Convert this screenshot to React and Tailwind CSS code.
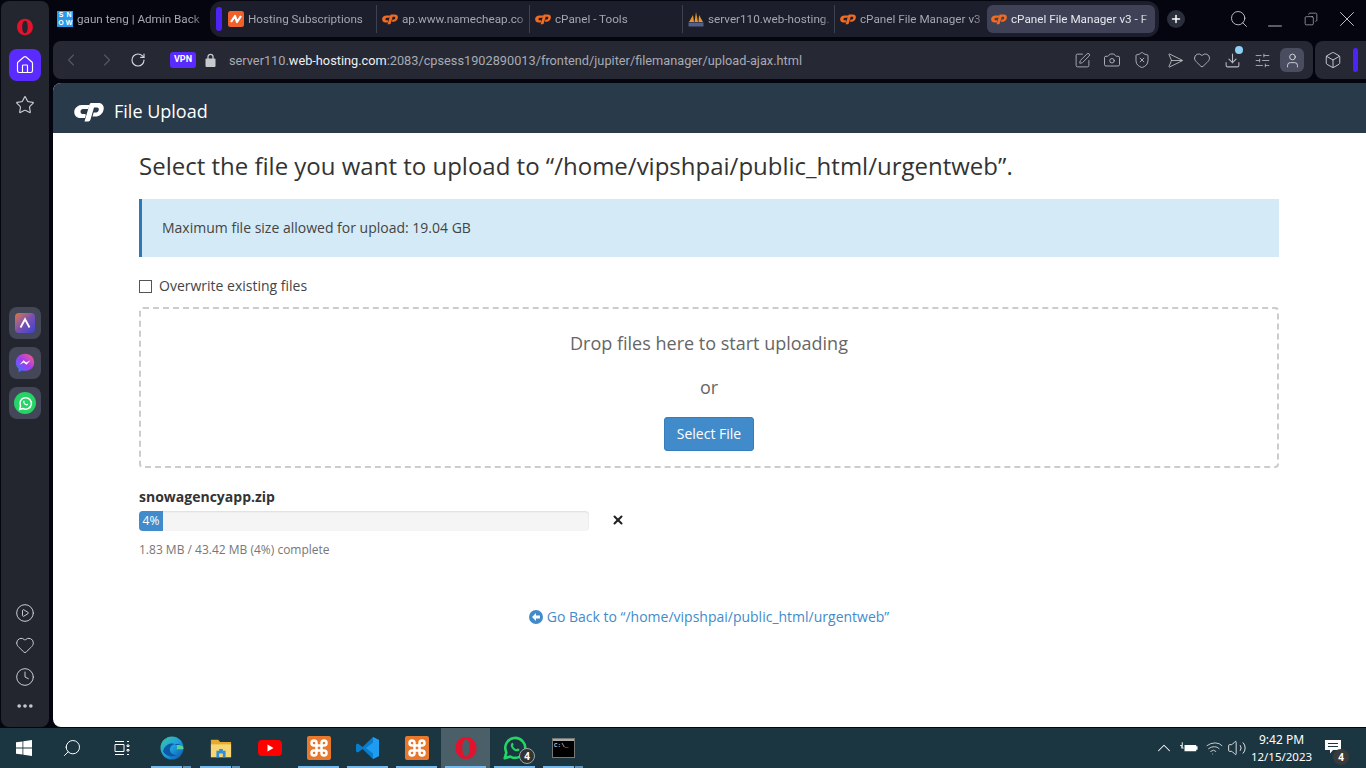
import {
  Box, Camera, ChevronLeft, ChevronRight, ChevronUp, Clock, Copy, Download, Heart, Home,
  MoreHorizontal, Plus, RotateCw, Search, Send, ShieldX, SlidersHorizontal, SquarePen,
  Star, User, Volume2, Wifi, X, Minus, CirclePlay,
} from 'lucide-react';

// logo cPanel (c + P inclinados)
function CpLogo({ className, color = '#f26b21' }) {
  return (
    <svg viewBox="0 0 30 20" className={className} fill={color}>
      <path d="M8 3.500h7.500l-1.200 4H9c-3 0-3.500 5-.5 5h2c1 0 1.500.5 1.200 1.500l-.7 2.500H6.500c-5 0-7-4-6-8 1-3 4-5 7.500-5z" />
      <path d="M10.500 20 15.500 3c.3-1 1-1.500 2-1.500H24c4.500 0 6.500 3 5.500 7-1 4-4 6.500-8 6.500h-3l1.200-4H22c3 0 4-5 1-5h-3l-3.500 12c-.5 1.500-1.500 2-3 2z" />
    </svg>
  );
}

function NamecheapIcon() {
  return (
    <svg viewBox="0 0 16 16" className="h-4 w-4 shrink-0">
      <rect width="16" height="16" rx="2.500" fill="#f0622a" />
      <path d="M3 11 7 5l2 6 4-6" fill="none" stroke="#fff" strokeWidth="2.200" strokeLinejoin="round" />
    </svg>
  );
}

function SnowIcon() {
  return (
    <div className="grid h-4 w-4 shrink-0 grid-cols-2 bg-[#2a9bea] font-['Liberation_Sans',sans-serif] text-[7px] font-bold leading-[8px] text-white">
      <span className="text-center">S</span>
      <span className="text-center">N</span>
      <span className="text-center">O</span>
      <span className="text-center">W</span>
    </div>
  );
}

function SailIcon() {
  return (
    <svg viewBox="0 0 16 16" className="h-4 w-4 shrink-0">
      <path d="M1 11 5 4l1 7zM6.500 11 8 1l2 10zM10.500 11 11 4l4 7z" fill="#e8942a" />
      <rect x="0.500" y="11.500" width="15" height="4" fill="#54608a" />
    </svg>
  );
}

function Tab({ icon, title, w, divider = true }) {
  return (
    <div className={`flex h-7 shrink-0 items-center gap-1 pl-[5px] ${w} ${divider ? 'border-r border-[#3d4150]' : ''}`}>
      {icon}
      <span className="min-w-0 flex-1 overflow-hidden whitespace-nowrap pr-1 pt-[2px] text-[11.700px] text-[#a4a7b0] [mask-image:linear-gradient(to_right,black_90%,transparent)]">
        {title}
      </span>
    </div>
  );
}

function SideApp({ children }) {
  return <div className="flex h-8 w-8 items-center justify-center rounded-lg bg-[#444757]">{children}</div>;
}

function ToolIcon({ children }) {
  return <div className="relative flex w-[30px] shrink-0 justify-center">{children}</div>;
}

function TaskItem({ children, active, open, more }) {
  return (
    <div className={`relative flex h-10 w-[49px] items-center justify-center ${active ? 'bg-[#4b5f69]' : ''}`}>
      {children}
      {open && (
        <div className={`absolute bottom-0 left-1 h-[2px] bg-[#76b9ed] ${more ? 'w-[31px]' : 'w-[41px]'}`} />
      )}
      {more && <div className="absolute bottom-0 left-[36px] h-[2px] w-[8px] bg-[#5f93b8]" />}
    </div>
  );
}

function OperaO({ className }) {
  return (
    <svg viewBox="0 0 24 24" className={className}>
      <path fillRule="evenodd" fill="#e3132d" d="M12 1C5.500 1 1.500 6 1.500 12S5.500 23 12 23s10.500-5 10.500-11S18.500 1 12 1zm0 2.600c2.500 0 3.700 4 3.700 8.400s-1.200 8.400-3.700 8.400S8.300 16.400 8.300 12 9.500 3.600 12 3.600z" />
    </svg>
  );
}

function XamppIcon() {
  return (
    <div className="flex h-6 w-6 items-center justify-center rounded-[2px] bg-[#e8782e]">
      <svg viewBox="0 0 24 24" className="h-5 w-5" fill="none" stroke="#fff" strokeWidth="3">
        <path d="M15 6v12a3 3 0 1 0 3-3H6a3 3 0 1 0 3 3V6a3 3 0 1 0-3 3h12a3 3 0 1 0-3-3" />
      </svg>
    </div>
  );
}

function WhatsGlyph({ className, color = '#25d366' }) {
  return (
    <svg viewBox="0 0 24 24" className={className} fill="none">
      <path d="M2.500 21.500 4 16a9.200 9.200 0 1 1 3.700 3.900z" stroke={color} strokeWidth="2.400" strokeLinejoin="round" />
      <path d="M8.500 8c.8-1.500 1.700-1 2.200.5.200.7-.7 1-.6 1.600.4 1.200 1.800 2.600 3.200 3 .6.100.9-.8 1.500-.6 1.600.5 2 1.400.5 2.300-3.300 1.600-8.600-3.800-6.800-6.800z" fill={color} />
    </svg>
  );
}

export default function App() {
  return (
    <div className="flex h-[768px] w-[1366px] flex-col overflow-hidden bg-[#05050f] font-['Roboto',sans-serif]">
      <div className="flex h-[727px] shrink-0">
        {/* barra lateral do Opera */}
        <aside className="mt-px ml-px flex h-[726px] w-[48px] shrink-0 flex-col items-center rounded-lg bg-[#23262f] pb-[11px]">
          <OperaO className="mt-[17px] h-[18px] w-[18px]" />
          <div className="mt-[13px] flex h-8 w-8 items-center justify-center rounded-lg bg-[#5a2bff]">
            <Home size={20} strokeWidth={1.400} className="text-white" />
          </div>
          <Star size={20} strokeWidth={1.400} className="mt-[14px] text-[#c9cbd2]" />
          <div className="mt-[192px] flex flex-col gap-2">
            <SideApp>
              <div className="flex h-5 w-5 items-center justify-center rounded bg-gradient-to-br from-[#e0702a] via-[#7a4fb0] to-[#3a3fd0]">
                <svg viewBox="0 0 16 16" className="h-3 w-3" fill="none" stroke="#fff" strokeWidth="2.400">
                  <path d="M2 14 8 3l6 11" />
                </svg>
              </div>
            </SideApp>
            <SideApp>
              <svg viewBox="0 0 24 24" className="h-[22px] w-[22px]">
                <defs>
                  <linearGradient id="msg" x1="0" y1="1" x2="1" y2="0">
                    <stop offset="0" stopColor="#2f7bff" />
                    <stop offset="0.500" stopColor="#a03cf0" />
                    <stop offset="1" stopColor="#ff5f78" />
                  </linearGradient>
                </defs>
                <path d="M12 2C6 2 2 6.200 2 11.500c0 2.800 1.100 5.200 3 6.900V22l3.300-1.800c1.200.3 2.400.5 3.700.5 6 0 10-4 10-9.200S18 2 12 2z" fill="url(#msg)" />
                <path d="m6 14 4.500-5 2.800 2.500L18 9l-4.500 5-2.800-2.500z" fill="#fff" />
              </svg>
            </SideApp>
            <SideApp>
              <div className="flex h-[22px] w-[22px] items-center justify-center rounded-full bg-[#25d366]">
                <WhatsGlyph className="h-[15px] w-[15px]" color="#fff" />
              </div>
            </SideApp>
          </div>
          <div className="mt-auto flex flex-col items-center gap-3">
            <CirclePlay size={20} strokeWidth={1.200} className="text-[#c9cbd2]" />
            <Heart size={20} strokeWidth={1.200} className="text-[#c9cbd2]" />
            <Clock size={20} strokeWidth={1.200} className="text-[#c9cbd2]" />
          </div>
          <MoreHorizontal size={20} strokeWidth={2.400} className="mt-[9px] text-[#c9cbd2]" />
        </aside>

        <div className="flex min-w-0 flex-1 flex-col pl-1">
          {/* abas */}
          <div className="flex h-[41px] shrink-0 pt-px">
            <div className="flex h-9 w-[157px] shrink-0 items-center gap-1 pl-1">
              <SnowIcon />
              <span className="min-w-0 flex-1 overflow-hidden whitespace-nowrap pr-1 pt-[2px] text-[11.700px] text-[#a4a7b0] [mask-image:linear-gradient(to_right,black_85%,transparent)]">
                gaun teng | Admin Back
              </span>
            </div>
            <div className="flex h-9 w-[949px] shrink-0 items-center rounded-xl bg-[#1c1e2b] pl-[6px]">
              <div className="mr-[1px] h-6 w-[6px] shrink-0 rounded-full bg-[#4d24f5]" />
              <Tab icon={<NamecheapIcon />} title="Hosting Subscriptions" w="w-[154px]" />
              <Tab icon={<CpLogo className="h-[12px] w-4 shrink-0" />} title="ap.www.namecheap.co" w="w-[153px]" />
              <Tab icon={<CpLogo className="h-[12px] w-4 shrink-0" />} title="cPanel - Tools" w="w-[153px]" />
              <Tab icon={<SailIcon />} title="server110.web-hosting." w="w-[152px]" />
              <Tab icon={<CpLogo className="h-[12px] w-4 shrink-0" />} title="cPanel File Manager v3" w="w-[152px]" divider={false} />
              <div className="flex h-7 w-[168px] shrink-0 items-center gap-1 rounded-md bg-[#3f4257] pl-1">
                <CpLogo className="h-[12px] w-4 shrink-0" />
                <span className="min-w-0 flex-1 overflow-hidden whitespace-nowrap pr-1 pt-[2px] text-[11.700px] text-[#e6e7ec] [mask-image:linear-gradient(to_right,black_90%,transparent)]">
                  cPanel File Manager v3 - F
                </span>
              </div>
            </div>
            <div className="ml-2 mt-[9px] flex h-[18px] w-[18px] items-center justify-center rounded-full bg-[#2a2d3a]">
              <Plus size={12} strokeWidth={3} className="text-white" />
            </div>
            <div className="ml-[36px] flex h-9 flex-1 items-center text-[#d9dade]">
              <div className="flex w-9 justify-center"><Search size={20} strokeWidth={1} /></div>
              <div className="flex w-9 justify-center pt-[14px]"><Minus size={22} strokeWidth={0.900} /></div>
              <div className="flex w-9 justify-center"><Copy size={14} strokeWidth={1} className="-scale-x-100" /></div>
              <div className="flex w-9 justify-center"><X size={26} strokeWidth={0.800} /></div>
            </div>
          </div>

          {/* barra de endereco */}
          <div className="flex h-[38px] shrink-0 gap-[2px]">
            <div className="flex min-w-0 flex-1 items-center rounded-lg bg-[#262934] pl-2">
              <ChevronLeft size={20} strokeWidth={1.300} className="text-[#555863]" />
              <ChevronRight size={20} strokeWidth={1.300} className="ml-4 text-[#555863]" />
              <RotateCw size={16} strokeWidth={1.700} className="ml-[13px] text-[#d5d6da]" />
              <span className="ml-[24px] flex h-[16px] w-[26px] items-center justify-center rounded-[3px] bg-[#5a2bff] text-[9px] font-bold text-white">VPN</span>
              <svg viewBox="0 0 11 14" className="ml-[9px] h-[14px] w-[11px]">
                <path d="M3 6V3.800a2.500 2.500 0 0 1 5 0V6" fill="none" stroke="#c8c9ce" strokeWidth="1.300" />
                <rect x="0.500" y="5.500" width="10" height="8.500" rx="1" fill="#c8c9ce" />
              </svg>
              <div className="ml-[13px] whitespace-nowrap pt-[2px] text-[12.750px] text-[#a9abb3]">
                server110.<span className="text-[#f0f0f2]">web-hosting.com</span>:2083/cpsess1902890013/frontend/jupiter/filemanager/upload-ajax.html
              </div>
              <div className="ml-auto flex items-center pr-[6px] text-[#b9bbc2]">
                <ToolIcon><SquarePen size={17} strokeWidth={1.200} /></ToolIcon>
                <ToolIcon><Camera size={18} strokeWidth={1.200} /></ToolIcon>
                <ToolIcon><ShieldX size={18} strokeWidth={1.200} /></ToolIcon>
                <ToolIcon><Send size={17} strokeWidth={1.200} className="rotate-45" /></ToolIcon>
                <ToolIcon><Heart size={18} strokeWidth={1.200} /></ToolIcon>
                <ToolIcon>
                  <Download size={17} strokeWidth={1.500} />
                  <div className="absolute left-[18px] -top-[6px] h-2 w-2 rounded-full bg-[#8fd0f5]" />
                </ToolIcon>
                <ToolIcon><SlidersHorizontal size={17} strokeWidth={1.200} /></ToolIcon>
                <ToolIcon>
                  <div className="flex h-6 w-6 items-center justify-center rounded-md bg-[#4a4d60]">
                    <User size={17} strokeWidth={1.200} className="text-[#e4e5e9]" />
                  </div>
                </ToolIcon>
              </div>
            </div>
            <div className="flex w-[51px] shrink-0 items-center rounded-l-lg bg-[#262934] pl-[9px]">
              <Box size={18} strokeWidth={1.200} className="text-[#d5d6da]" />
              <div className="ml-[11px] h-6 w-[5px] rounded-full bg-[#4d24f5]" />
            </div>
          </div>

          {/* pagina */}
          <div className="mt-1 flex min-h-0 flex-1 flex-col overflow-hidden rounded-bl-lg rounded-tl-lg bg-white font-['Open_Sans',sans-serif]">
            <header className="flex h-[50px] shrink-0 items-center bg-[#293a4a] pl-[21px] pt-[6px]">
              <CpLogo className="h-[21px] w-[30px]" color="#ffffff" />
              <h1 className="ml-[10px] text-[18px] text-white">File Upload</h1>
            </header>
            <main className="flex-1 pl-[86px] pr-[87px] text-[#333]">
              <h2 className="mt-[15px] text-[24px] leading-9">
                Select the file you want to upload to “/home/vipshpai/public_html/urgentweb”.
              </h2>
              <div className="mt-[15px] flex h-[58px] items-center border-l-[3px] border-[#2e79b5] bg-[#d4ebf7] pb-[2px] pl-5 text-[14px] text-[#444]">
                Maximum file size allowed for upload: 19.04 GB
              </div>
              <label className="mt-[19px] flex h-5 items-center text-[14px] text-[#444]">
                <span className="h-[13px] w-[13px] border border-[#555] bg-white" />
                <span className="ml-[7px] pb-[2px]">Overwrite existing files</span>
              </label>
              <div className="mt-[11px] flex h-[161px] flex-col items-center rounded-[4px] border-2 border-dashed border-[#ccc] text-[18px] text-[#666]">
                <div className="mt-[21px] leading-[26px]">Drop files here to start uploading</div>
                <div className="mt-[18px] leading-[26px]">or</div>
                <button className="mt-[17px] h-[34px] w-[90px] rounded-[3px] border border-[#357ebd] bg-[#428bca] pb-[2px] text-[14px] text-white">
                  Select File
                </button>
              </div>
              <div className="mt-[19px] text-[14px] font-bold leading-[19px] text-[#333]">snowagencyapp.zip</div>
              <div className="mt-[5px] flex items-center">
                <div className="h-5 w-[450px] overflow-hidden rounded bg-[#f5f5f5] shadow-[inset_0_1px_2px_rgba(0,0,0,0.1)]">
                  <div className="flex h-5 w-6 items-center justify-center bg-[#428bca] text-[12px] text-white">4%</div>
                </div>
                <X size={14} strokeWidth={3.500} className="ml-[22px] -mt-[2px] text-[#222]" />
              </div>
              <div className="mt-[10px] text-[12px] leading-[18px] text-[#777]">1.83 MB / 43.42 MB (4%) complete</div>
              <div className="mt-[48px] flex items-center justify-center text-[14px] leading-5 text-[#428bca]">
                <svg viewBox="0 0 16 16" className="mr-[4px] h-[14px] w-[14px]">
                  <circle cx="8" cy="8" r="8" fill="#428bca" />
                  <path d="M8 3.500 3.500 8 8 12.500V9.700h4.500V6.300H8z" fill="#fff" />
                </svg>
                Go Back to “/home/vipshpai/public_html/urgentweb”
              </div>
            </main>
          </div>
        </div>
      </div>

      {/* barra de tarefas do Windows */}
      <footer className="mt-px flex h-10 shrink-0 items-center bg-[#1b3541] font-['Noto_Sans',sans-serif] text-white">
        <div className="flex w-12 justify-center">
          <svg viewBox="0 0 16 16" className="h-4 w-4" fill="#fff">
            <path d="M0 2.300 6.500 1.400v6.200H0zM7.300 1.300 16 0v7.600H7.300zM0 8.400h6.500v6.200L0 13.700zM7.300 8.400H16V16l-8.700-1.300z" />
          </svg>
        </div>
        <div className="flex w-12 justify-center">
          <Search size={20} strokeWidth={1.200} className="-scale-x-100" />
        </div>
        <div className="flex w-[51px] justify-center">
          <svg viewBox="0 0 16 16" className="h-4 w-4" fill="none" stroke="#fff" strokeWidth="1">
            <path d="M1 1.500h9M1 14.500h9M1 4.500h9v7H1zM13 1.500h2M13 5h2v1.500h-2zM13 9.500h2V11h-2zM13 14.500h2" />
          </svg>
        </div>
        <TaskItem open more>
          <svg viewBox="0 0 24 24" className="h-6 w-6">
            <defs>
              <linearGradient id="edge" x1="0" y1="0" x2="1" y2="1">
                <stop offset="0" stopColor="#3cc9a0" />
                <stop offset="0.500" stopColor="#1f9fe0" />
                <stop offset="1" stopColor="#0b4fa8" />
              </linearGradient>
            </defs>
            <circle cx="12" cy="12" r="11.500" fill="url(#edge)" />
            <path d="M23.500 13c-1-4-5-5.500-8-5-3.500.5-6 3-5.500 6.500.4 3 3.500 4.500 6.500 4.500-5 3-11 1-13.500-3.500C5 7 13 6 16 9c2 2 1 4.500-1 5h7z" fill="#0c59a6" />
            <path d="M16 9c2 2 1 4-1 4.500H22c1.500-.2 1.600-1 1.500-1.500-.5-2.500-2.500-3.500-7.500-3z" fill="#54d48e" />
          </svg>
        </TaskItem>
        <TaskItem open more>
          <svg viewBox="0 0 24 24" className="h-[22px] w-[22px]">
            <path d="M1 3h8l2 2.500h12V22H1z" fill="#e8a92e" />
            <path d="M1 8h22v14H1z" fill="#f7d774" />
            <path d="M7 22v-7h3v-2h4v2h3v7h-3v-4h-4v4z" fill="#2f8fd8" />
          </svg>
        </TaskItem>
        <TaskItem>
          <svg viewBox="0 0 24 16" className="h-4 w-6">
            <rect width="24" height="16" rx="4" fill="#f00" />
            <path d="m9.500 4.500 6 3.500-6 3.500z" fill="#fff" />
          </svg>
        </TaskItem>
        <TaskItem open><XamppIcon /></TaskItem>
        <TaskItem open>
          <svg viewBox="0 0 24 24" className="h-6 w-6">
            <path d="M17 1 23 4v16l-6 3L6.500 13 2 16.500 0 15.500v-7L2 7.500 6.500 11z" fill="#0a7ccc" />
            <path d="M17 1 23 4v16l-6 3V6.500L10 12l7 5.500z" fill="#1f9cf0" />
          </svg>
        </TaskItem>
        <TaskItem open><XamppIcon /></TaskItem>
        <TaskItem active open>
          <OperaO className="h-6 w-6" />
        </TaskItem>
        <TaskItem open>
          <WhatsGlyph className="h-[26px] w-[26px]" />
          <div className="absolute left-[29px] top-[20px] flex h-4 w-4 items-center justify-center rounded-full border border-[#9aa5ab] bg-[#333] text-[10px] font-bold leading-none">4</div>
        </TaskItem>
        <TaskItem open more>
          <div className="h-[20px] w-[23px] border border-[#777] bg-black">
            <div className="h-[2px] bg-[#aaa]" />
            <div className="mt-[2px] ml-px font-['Liberation_Mono',monospace] text-[6px] leading-[6px] text-white">C:\_</div>
          </div>
        </TaskItem>

        {/* bandeja do sistema */}
        <div className="ml-auto flex items-center">
          <ChevronUp size={22} strokeWidth={1.100} />
          <svg viewBox="0 0 20 14" className="ml-[5px] h-[13px] w-[18px]" fill="#fff">
            <path d="M2 0v3H0v1h1.500v3H3V0zM5 3h13v1.500h1.500v4H18V10H5z" />
            <path d="M3 6h1v1H3z" />
          </svg>
          <Wifi size={18} strokeWidth={1.200} className="ml-[7px] -skew-x-12 text-[#cdd4d8]" />
          <Volume2 size={20} strokeWidth={1} className="ml-1" />
          <div className="w-[69px] text-center text-[12px] leading-[17px]">
            <div>9:42 PM</div>
            <div className="text-[11.500px]">12/15/2023</div>
          </div>
          <div className="relative ml-[9px] mr-[21px] h-5 w-5">
            <svg viewBox="0 0 16 14" className="mt-[2px] h-[14px] w-4" fill="#fff">
              <path d="M0 0h16v10H8l-3 3.500V10H0zM3 3v1h10V3zm0 3v1h10V6z" fillRule="evenodd" />
            </svg>
            <div className="absolute left-2 top-[11px] flex h-[16px] w-[16px] items-center justify-center rounded-full bg-[#3a3a3a] text-[10px] font-bold leading-none">4</div>
          </div>
        </div>
      </footer>
    </div>
  );
}
